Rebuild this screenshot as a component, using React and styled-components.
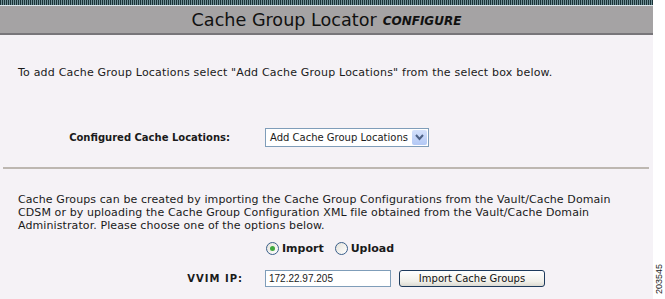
import styled, { createGlobalStyle } from 'styled-components';

const GlobalStyle = createGlobalStyle`
  html, body {
    margin: 0;
    padding: 0;
    background: #ffffff;
  }
  body {
    font-family: "DejaVu Sans", Verdana, sans-serif;
    color: #1a1a1a;
  }
  * {
    box-sizing: border-box;
  }
`;

const Page = styled.div`
  display: flex;
  width: 665px;
  height: 299px;
  overflow: hidden;
`;

const Panel = styled.div`
  width: 653px;
  background-color: #f5f2f6;
  display: flex;
  flex-direction: column;
`;

const Side = styled.div`
  flex: 1;
  position: relative;
  background: #ffffff;
`;

const FigureNumber = styled.span`
  position: absolute;
  left: 1px;
  top: 294px;
  transform: rotate(-90deg);
  transform-origin: left top;
  font-family: "Liberation Sans", Arial, sans-serif;
  font-size: 9px;
  color: #222;
  white-space: nowrap;
`;

const Stripe = styled.div`
  height: 6px;
  background: repeating-linear-gradient(
    90deg,
    #1a3237 0px,
    #1a3237 1px,
    #6f8f95 1px,
    #6f8f95 2px
  );
  border-bottom: 1px solid #dbe6ea;
`;

const Header = styled.div`
  height: 29px;
  background-color: #a5a3a4;
  border-bottom: 2px solid #78767a;
  display: flex;
  align-items: center;
  justify-content: center;
  gap: 6px;
  color: #111;
`;

const Title = styled.span`
  font-size: 17.6px;
`;

const Subtitle = styled.span`
  font-size: 12px;
  font-weight: bold;
  font-style: italic;
  margin-top: 3px;
`;

const Body = styled.div`
  display: flex;
  flex-direction: column;
  font-size: 11px;
  letter-spacing: 0.2px;
`;

const Text = styled.p`
  margin: ${({ $top }) => $top}px 0 0 18px;
  line-height: 13px;
  width: 626px;
  letter-spacing: ${({ $spacing }) => $spacing ?? 0.2}px;
`;

const FormRow = styled.div`
  display: flex;
  align-items: center;
  margin-top: ${({ $top }) => $top}px;
`;

const Label = styled.label`
  width: ${({ $width }) => $width}px;
  text-align: right;
  padding-right: ${({ $pad }) => $pad}px;
  font-size: 10px;
  font-weight: bold;
  letter-spacing: ${({ $spacing }) => $spacing || 0}px;
`;

const SelectBox = styled.div`
  display: flex;
  align-items: center;
  justify-content: space-between;
  width: 164px;
  height: 19px;
  border: 1px solid #7f9db9;
  background: #fff;
  padding-left: 4px;
  font-size: 10px;
  letter-spacing: 0;
`;

const SelectArrow = styled.span`
  width: 15px;
  height: 15px;
  margin-right: 1px;
  background: linear-gradient(#d4e1fb, #b3c8f5);
  border-radius: 2px;
  display: flex;
  align-items: center;
  justify-content: center;
`;

const Rule = styled.hr`
  margin: 20px 4px 0 3px;
  border: none;
  border-top: 2px solid #bdb7b1;
`;

const RadioGroup = styled.div`
  display: flex;
  align-items: center;
  gap: 11px;
  margin: 10px 0 0 266px;
`;

const RadioLabel = styled.span`
  display: flex;
  align-items: center;
  gap: 3px;
  font-weight: bold;
  font-size: 11px;
  letter-spacing: 0;
`;

const Radio = styled.span`
  width: 13px;
  height: 13px;
  border-radius: 50%;
  border: 1px solid #3a5f8a;
  background: linear-gradient(135deg, #e4e2da, #ffffff);
  display: flex;
  align-items: center;
  justify-content: center;

  &::after {
    content: '';
    width: 5px;
    height: 5px;
    border-radius: 50%;
    background: ${({ $checked }) => ($checked ? '#3fa83f' : 'transparent')};
  }
`;

const TextInput = styled.div`
  width: 126px;
  height: 17px;
  border: 1px solid #7f9db9;
  background: #fff;
  padding-left: 3px;
  display: flex;
  align-items: center;
  font-family: "Liberation Sans", Arial, sans-serif;
  font-size: 10px;
  letter-spacing: 0;
`;

const Button = styled.button`
  margin-left: 8px;
  width: 146px;
  height: 17px;
  border: 1px solid #1d3a5c;
  border-radius: 3px;
  background: linear-gradient(#ffffff, #f0efe9 70%, #dcdad2);
  font-family: "DejaVu Sans", Verdana, sans-serif;
  font-size: 10px;
  color: #111;
  padding: 0;
`;

export default function App() {
  return (
    <>
      <GlobalStyle />
      <Page>
        <Panel>
          <Stripe />
          <Header>
            <Title>Cache Group Locator</Title>
            <Subtitle>CONFIGURE</Subtitle>
          </Header>
          <Body>
            <Text $top={31}>
              To add Cache Group Locations select "Add Cache Group Locations" from the select box below.
            </Text>
            <FormRow $top={49}>
              <Label $width={265} $pad={35}>Configured Cache Locations:</Label>
              <SelectBox>
                Add Cache Group Locations
                <SelectArrow>
                  <svg width="9" height="7" viewBox="0 0 9 7">
                    <path d="M1 1 L4.5 5 L8 1" stroke="#4d6185" strokeWidth="2" fill="none" />
                  </svg>
                </SelectArrow>
              </SelectBox>
            </FormRow>
            <Rule />
            <Text $top={24} $spacing={0.1}>
              Cache Groups can be created by importing the Cache Group Configurations from the Vault/Cache Domain
              CDSM or by uploading the Cache Group Configuration XML file obtained from the Vault/Cache Domain
              Administrator. Please choose one of the options below.
            </Text>
            <RadioGroup>
              <RadioLabel>
                <Radio $checked />
                Import
              </RadioLabel>
              <RadioLabel>
                <Radio />
                Upload
              </RadioLabel>
            </RadioGroup>
            <FormRow $top={15}>
              <Label $width={265} $pad={22} $spacing={1}>VVIM IP:</Label>
              <TextInput>172.22.97.205</TextInput>
              <Button>Import Cache Groups</Button>
            </FormRow>
          </Body>
        </Panel>
        <Side>
          <FigureNumber>203545</FigureNumber>
        </Side>
      </Page>
    </>
  );
}
